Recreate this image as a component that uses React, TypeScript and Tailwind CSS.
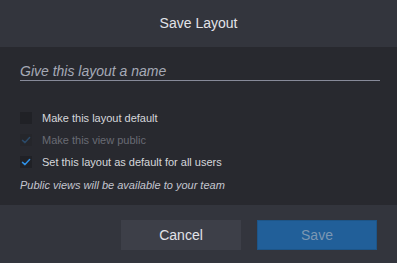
import React from "react";

function Check({ color }: { color: string }) {
  return (
    <svg width="10" height="10" viewBox="0 0 10 10" fill="none">
      <path d="M1.5 5.4 L4 7.6 L8.6 2.6" stroke={color} strokeWidth="1.5" strokeLinecap="round" strokeLinejoin="round" />
    </svg>
  );
}

export default function App() {
  return (
    <div className="w-[397px] h-[263px] flex flex-col bg-[#28292f]" style={{ fontFamily: '"Liberation Sans", Arial, sans-serif' }}>
      <div className="h-[47px] shrink-0 flex items-center justify-center bg-[#33353d] text-[14px] text-[#e2e3e8]">
        Save Layout
      </div>
      <div className="h-[158px] shrink-0 bg-[#28292f] pl-5 pr-[17px] pt-[16px]">
        <div className="h-[18px] border-b border-[#878a99] text-[14px] italic text-[#a6a9b6] leading-[16px]">
          Give this layout a name
        </div>
        <div className="mt-[31px] flex flex-col gap-[10px] text-[11px] leading-[12px]">
          <div className="flex items-center gap-[10px]">
            <div className="w-[12px] h-[12px] bg-[#202126]" />
            <span className="text-[#d6d7dc]">Make this layout default</span>
          </div>
          <div className="flex items-center gap-[10px]">
            <div className="w-[12px] h-[12px] bg-[#25262b] flex items-center justify-center">
              <Check color="#2b4a68" />
            </div>
            <span className="text-[#686b74]">Make this view public</span>
          </div>
          <div className="flex items-center gap-[10px]">
            <div className="w-[12px] h-[12px] bg-[#202126] flex items-center justify-center">
              <Check color="#2f90e6" />
            </div>
            <span className="text-[#d6d7dc]">Set this layout as default for all users</span>
          </div>
        </div>
        <div className="mt-[11px] text-[11px] italic text-[#c4c6cf] leading-[13px]">
          Public views will be available to your team
        </div>
      </div>
      <div className="flex-1 bg-[#33353d] flex justify-end items-start gap-4 pr-5 pt-[15px]">
        <button className="w-[120px] h-[30px] bg-[#3d3f48] text-[14px] text-[#e2e3e8]">Cancel</button>
        <button className="w-[120px] h-[30px] bg-[#215f99] border border-[#1d5588] text-[14px] text-[#7b97b3]">Save</button>
      </div>
    </div>
  );
}
